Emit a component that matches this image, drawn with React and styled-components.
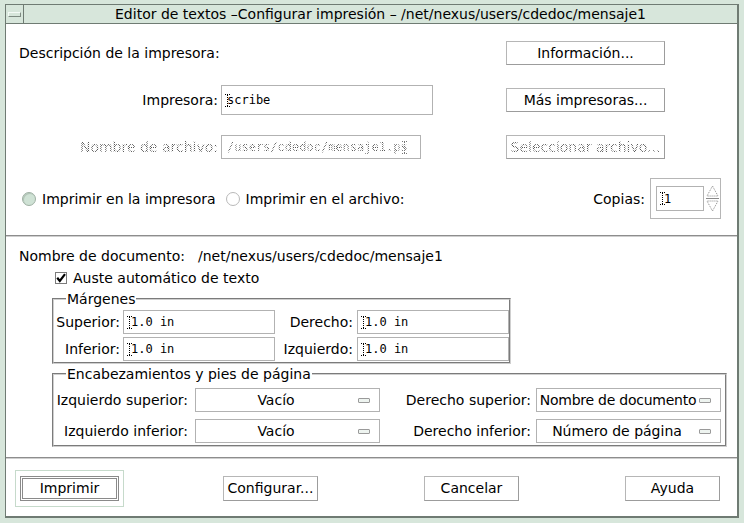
import React from "react";
import styled, { createGlobalStyle } from "styled-components";

const GlobalStyle = createGlobalStyle`
  html, body { margin: 0; padding: 0; background: #d7e6db; }
  body {
    font-family: "DejaVu Sans", "Liberation Sans", sans-serif;
    font-size: 14px;
    color: #000;
  }
  * { box-sizing: border-box; }
`;

const Frame = styled.div`
  width: 744px;
  height: 523px;
  background: #d7e6db;
  padding: 4px 5px 5px 5px;
  display: flex;
`;

const Window = styled.div`
  flex: 1;
  display: flex;
  flex-direction: column;
  border: 1px solid #6f7b73;
  border-right-width: 2px;
  border-bottom-width: 2px;
  background: #fff;
`;

const TitleBar = styled.div`
  height: 19px;
  flex: none;
  display: flex;
  background: #d7e6db;
  border-bottom: 1px solid #6f7b73;
`;

const MenuButton = styled.div`
  width: 18px;
  flex: none;
  border-right: 1px solid #6f7b73;
  display: flex;
  align-items: center;
  justify-content: center;
  &::before {
    content: "";
    width: 11px;
    height: 3px;
    border: 1px solid #7d8a81;
    border-top-color: #f4faf6;
    border-left-color: #f4faf6;
  }
`;

const Title = styled.div`
  flex: 1;
  text-align: center;
  line-height: 18px;
  font-size: 14px;
  white-space: nowrap;
`;

const Body = styled.div`
  flex: 1;
  display: flex;
  flex-direction: column;
`;

const PrinterSection = styled.section`
  height: 211px;
  flex: none;
  padding-top: 17px;
  display: flex;
  flex-direction: column;
`;

const Separator = styled.div`
  height: 2px;
  flex: none;
  border-top: 1px solid #8d8d8d;
  border-bottom: 1px solid #cfcfcf;
`;

const Row = styled.div`
  display: flex;
  align-items: center;
  height: ${(p) => p.$h}px;
  margin-top: ${(p) => p.$mt || 0}px;
  flex: none;
`;

const LabelCell = styled.div`
  flex: none;
  width: ${(p) => (p.$wide ? 500 : 215)}px;
  text-align: ${(p) => (p.$wide ? "left" : "right")};
  padding: ${(p) => (p.$wide ? "0 0 0 13px" : "0 3px 0 0")};
  white-space: nowrap;
`;

const FieldCell = styled.div`
  flex: none;
  width: 285px;
`;

const Dim = styled.span`
  color: transparent;
  background: repeating-conic-gradient(#5a5a5a 0 25%, transparent 0 50%) 0 0 / 2px 2px;
  -webkit-background-clip: text;
  background-clip: text;
`;

const Input = styled.div`
  width: ${(p) => p.$w}px;
  height: ${(p) => p.$h || 24}px;
  flex: none;
  border: 1px solid #b2b2b2;
  background: #fff;
  display: flex;
  align-items: center;
  padding-left: ${(p) => (p.$pad == null ? 3 : p.$pad)}px;
  font-family: "DejaVu Sans Mono", "Liberation Mono", monospace;
  font-size: 12px;
  overflow: hidden;
  white-space: nowrap;
`;

const CursorSvg = styled.svg`
  flex: none;
  width: 5px;
  height: 13px;
  margin-right: ${(p) => p.$overlap || 0}px;
  margin-left: ${(p) => p.$before || 0}px;
  position: relative;
  z-index: 1;
`;

const Cursor = ({ overlap, before, dim }) => (
  <CursorSvg viewBox="0 0 5 13" $overlap={overlap} $before={before}>
    <g stroke={dim ? "#777" : "#000"} strokeWidth="1" strokeDasharray="1 1" fill="none">
      <path d="M0 0.5H5" />
      <path d="M2.5 1V12" />
      <path d="M0 12.5H5" />
    </g>
  </CursorSvg>
);

const Button = styled.div`
  flex: none;
  width: ${(p) => p.$w || 159}px;
  height: ${(p) => p.$h || 24}px;
  border: 1px solid #b6b6b6;
  border-right-color: #9c9c9c;
  border-bottom-color: #9c9c9c;
  background: #fff;
  display: flex;
  align-items: center;
  justify-content: center;
  white-space: nowrap;
  margin-left: ${(p) => p.$ml || 0}px;
`;

const DefaultRing = styled.div`
  flex: none;
  width: 109px;
  height: 37px;
  border: 1px solid #c6dacb;
  display: flex;
  align-items: center;
  justify-content: center;
`;

const DefaultButton = styled.div`
  width: 99px;
  height: 25px;
  border: 3px double #8a8a8a;
  display: flex;
  align-items: center;
  justify-content: center;
`;

const RadioGroup = styled.div`
  display: flex;
  align-items: center;
  padding-left: 16px;
  gap: 10px;
`;

const RadioItem = styled.label`
  display: flex;
  align-items: center;
  gap: 6px;
  white-space: nowrap;
`;

const RadioDot = styled.span`
  width: 14px;
  height: 14px;
  border-radius: 50%;
  flex: none;
  border: 1px solid ${(p) => (p.$on ? "#9fb0a4" : "#b9b9b9")};
  background: ${(p) => (p.$on ? "#cfe2d5" : "#fff")};
  box-shadow: ${(p) => (p.$on ? "inset 1px 1px 0 #b3c6b8" : "none")};
`;

const CopiesBox = styled.div`
  margin-left: auto;
  margin-right: 16px;
  display: flex;
  align-items: center;
  gap: 5px;
`;

const Spin = styled.div`
  width: 71px;
  height: 41px;
  border: 1px solid #b6b6b6;
  display: flex;
  align-items: center;
  padding-left: 5px;
  gap: 2px;
`;

const SpinArrows = () => (
  <svg width="13" height="27" viewBox="0 0 13 27">
    <g fill="none" stroke="#8a8a8a" strokeWidth="1" strokeDasharray="1 1">
      <path d="M6.5 1 L12 11 L1 11 Z" />
      <path d="M6.5 26 L12 16 L1 16 Z" />
    </g>
    <path d="M0 13.5H13" stroke="#8a8a8a" strokeWidth="1" />
  </svg>
);

const DocSection = styled.section`
  flex: none;
  height: 220px;
  padding-top: 10px;
  display: flex;
  flex-direction: column;
`;

const DocLine = styled.div`
  height: 18px;
  display: flex;
  align-items: center;
  padding-left: 13px;
  white-space: nowrap;
`;

const DocLabel = styled.span`
  width: 179px;
  flex: none;
`;

const CheckLine = styled.label`
  height: 16px;
  margin-top: 5px;
  display: flex;
  align-items: center;
  gap: 6px;
  padding-left: 49px;
`;

const CheckBox = () => (
  <svg width="12" height="12" viewBox="0 0 12 12">
    <rect x="0.5" y="0.5" width="11" height="11" fill="#fff" stroke="#7b7b7b" />
    <path d="M2.2 5.8 L4.8 9 L10 2.2" fill="none" stroke="#000" strokeWidth="2.2" />
  </svg>
);

const Group = styled.fieldset`
  margin: ${(p) => p.$mt}px 0 0 46px;
  width: ${(p) => p.$w}px;
  padding: ${(p) => p.$pt}px 0 ${(p) => p.$pb}px 0;
  border: 2px groove #cfcfcf;
  min-width: 0;
  display: flex;
  flex-direction: column;
  gap: ${(p) => p.$gap}px;
`;

const Legend = styled.legend`
  margin-left: 12px;
  padding: 0 1px;
  line-height: 16px;
  font-size: 14px;
`;

const GroupRow = styled.div`
  display: flex;
  align-items: center;
  height: ${(p) => p.$h || 24}px;
`;

const GroupLabel = styled.div`
  flex: none;
  width: ${(p) => p.$w}px;
  text-align: right;
  padding-right: ${(p) => p.$pr || 3}px;
  white-space: nowrap;
`;

const OptionMenu = styled.div`
  flex: none;
  width: 185px;
  height: 24px;
  border: 1px solid #b2b2b2;
  display: flex;
  align-items: center;
  white-space: nowrap;
`;

const OptionText = styled.span`
  flex: 1;
  text-align: center;
  letter-spacing: ${(p) => (p.$tight ? "-0.25px" : "0")};
  padding-left: ${(p) => (p.$tight ? 2 : 0)}px;
`;

const OptionMark = styled.span`
  flex: none;
  width: 12px;
  height: 5px;
  margin: 0 9px 0 2px;
  border: 1px solid #9a9a9a;
  border-radius: 1px;
  background: #eef4f0;
`;

const ActionSection = styled.section`
  flex: 1;
  display: flex;
  align-items: center;
  padding-left: 9px;
  padding-top: 1px;
`;

const Option = ({ children, tight }) => (
  <OptionMenu>
    <OptionText $tight={tight}>{children}</OptionText>
    <OptionMark />
  </OptionMenu>
);

export default function App() {
  return (
    <>
      <GlobalStyle />
      <Frame>
        <Window>
          <TitleBar>
            <MenuButton />
            <Title>Editor de textos –Configurar impresión – /net/nexus/users/cdedoc/mensaje1</Title>
          </TitleBar>
          <Body>
            <PrinterSection>
              <Row $h={24}>
                <LabelCell $wide>Descripción de la impresora:</LabelCell>
                <Button>Información...</Button>
              </Row>
              <Row $h={30} $mt={20}>
                <LabelCell>Impresora:</LabelCell>
                <FieldCell>
                  <Input $w={212} $h={30}>
                    <Cursor overlap={-3} />
                    <span>scribe</span>
                  </Input>
                </FieldCell>
                <Button>Más impresoras...</Button>
              </Row>
              <Row $h={24} $mt={20}>
                <LabelCell>
                  <Dim>Nombre de archivo:</Dim>
                </LabelCell>
                <FieldCell>
                  <Input $w={200} $pad={5}>
                    <Dim>/users/cdedoc/mensaje1.ps</Dim>
                    <Cursor before={-6} dim />
                  </Input>
                </FieldCell>
                <Button>
                  <Dim>Seleccionar archivo...</Dim>
                </Button>
              </Row>
              <Row $h={41} $mt={19}>
                <RadioGroup>
                  <RadioItem>
                    <RadioDot $on />
                    Imprimir en la impresora
                  </RadioItem>
                  <RadioItem>
                    <RadioDot />
                    Imprimir en el archivo:
                  </RadioItem>
                </RadioGroup>
                <CopiesBox>
                  Copias:
                  <Spin>
                    <Input $w={48} $h={25} $pad={3}>
                      <Cursor overlap={-1} />
                      <span>1</span>
                    </Input>
                    <SpinArrows />
                  </Spin>
                </CopiesBox>
              </Row>
            </PrinterSection>
            <Separator />
            <DocSection>
              <DocLine>
                <DocLabel>Nombre de documento:</DocLabel>
                /net/nexus/users/cdedoc/mensaje1
              </DocLine>
              <CheckLine>
                <CheckBox />
                Auste automático de texto
              </CheckLine>
              <Group $mt={5} $w={459} $pt={3} $pb={1} $gap={3}>
                <Legend>Márgenes</Legend>
                <GroupRow>
                  <GroupLabel $w={69}>Superior:</GroupLabel>
                  <Input $w={152}>
                    <Cursor overlap={-1} />
                    <span>1.0 in</span>
                  </Input>
                  <GroupLabel $w={82} $pr={4}>Derecho:</GroupLabel>
                  <Input $w={152}>
                    <Cursor overlap={-1} />
                    <span>1.0 in</span>
                  </Input>
                </GroupRow>
                <GroupRow>
                  <GroupLabel $w={69}>Inferior:</GroupLabel>
                  <Input $w={152}>
                    <Cursor overlap={-1} />
                    <span>1.0 in</span>
                  </Input>
                  <GroupLabel $w={82} $pr={4}>Izquierdo:</GroupLabel>
                  <Input $w={152}>
                    <Cursor overlap={-1} />
                    <span>1.0 in</span>
                  </Input>
                </GroupRow>
              </Group>
              <Group $mt={2} $w={675} $pt={6} $pb={2} $gap={7}>
                <Legend>Encabezamientos y pies de página</Legend>
                <GroupRow>
                  <GroupLabel $w={141} $pr={7}>Izquierdo superior:</GroupLabel>
                  <Option>Vacío</Option>
                  <GroupLabel $w={156} $pr={5}>Derecho superior:</GroupLabel>
                  <Option tight>Nombre de documento</Option>
                </GroupRow>
                <GroupRow>
                  <GroupLabel $w={141} $pr={7}>Izquierdo inferior:</GroupLabel>
                  <Option>Vacío</Option>
                  <GroupLabel $w={156} $pr={5}>Derecho inferior:</GroupLabel>
                  <Option>Número de página</Option>
                </GroupRow>
              </Group>
            </DocSection>
            <Separator />
            <ActionSection>
              <DefaultRing>
                <DefaultButton>Imprimir</DefaultButton>
              </DefaultRing>
              <Button $w={95} $h={25} $ml={99}>Configurar...</Button>
              <Button $w={95} $h={25} $ml={106}>Cancelar</Button>
              <Button $w={95} $h={25} $ml={106}>Ayuda</Button>
            </ActionSection>
          </Body>
        </Window>
      </Frame>
    </>
  );
}
